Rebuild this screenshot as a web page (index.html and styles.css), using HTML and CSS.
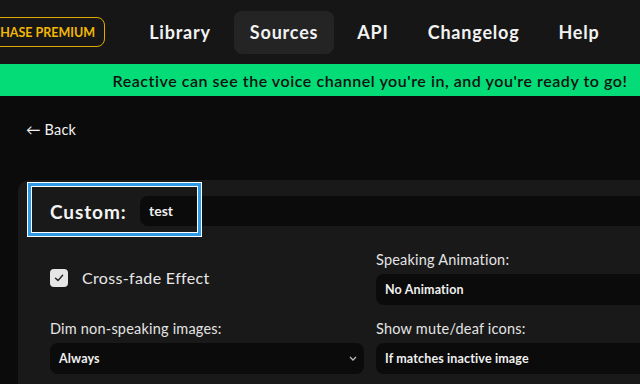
FILE: index.html
```html
<!DOCTYPE html>
<html lang="en">
<head>
  <meta charset="UTF-8" />
  <title>Reactive - Sources</title>
  <link rel="stylesheet" href="styles.css">
</head>
<body>

  <header class="topbar">
    <a class="premium" href="#">PURCHASE PREMIUM</a>
    <nav class="nav">
      <a href="#">Library</a>
      <a href="#" class="active">Sources</a>
      <a href="#">API</a>
      <a href="#">Changelog</a>
      <a href="#">Help</a>
    </nav>
  </header>

  <div class="banner">Reactive can see the voice channel you're in, and you're ready to go!</div>

  <main class="page">
    <a class="back" href="#">&larr; Back</a>

    <section class="card">
      <div class="name-row">
        <span class="name-label">Custom:</span>
        <div class="name-input">test</div>
      </div>
      <!-- tutorial highlight drawn over the name row -->
      <div class="highlight"></div>

      <div class="options">
        <label class="check">
          <span class="box">
            <svg width="10" height="10" viewBox="0 0 10 10"><path d="M1.5 5.2 L4 7.6 L8.6 2.2" fill="none" stroke="#222" stroke-width="1.4" stroke-linecap="round" stroke-linejoin="round"/></svg>
          </span>
          Cross-fade Effect
        </label>

        <div class="field">
          <div class="field-label">Speaking Animation:</div>
          <div class="select">No Animation</div>
        </div>

        <div class="field">
          <div class="field-label">Dim non-speaking images:</div>
          <div class="select">Always
            <svg class="chev" width="8" height="5" viewBox="0 0 8 5"><path d="M1 1 L4 4 L7 1" fill="none" stroke="#bbb" stroke-width="1.3"/></svg>
          </div>
        </div>

        <div class="field">
          <div class="field-label">Show mute/deaf icons:</div>
          <div class="select">If matches inactive image</div>
        </div>
      </div>
    </section>
  </main>

</body>
</html>
```

FILE: styles.css
```css
body {
  margin: 0;
  background: #0b0b0b;
  color: #e6e6e6;
  font-family: Lato, "Open Sans", sans-serif;
  overflow: hidden;
}

a {
  text-decoration: none;
  color: inherit;
}

.topbar {
  height: 64px;
  background: #161616;
  display: flex;
  align-items: center;
}

.premium {
  margin-left: -44px;
  height: 28px;
  padding: 0 9px 0 10px;
  display: flex;
  align-items: center;
  border: 1px solid #e3a900;
  border-radius: 8px;
  color: #f2b705;
  font-size: 12.5px;
  font-weight: 700;
  white-space: nowrap;
}

.nav {
  margin-left: 28px;
  display: flex;
  gap: 7px;
}

.nav a {
  height: 43px;
  padding: 0 16px;
  display: flex;
  align-items: center;
  font-size: 18px;
  font-weight: 700;
  letter-spacing: 0.8px;
  color: #f2f2f2;
  border-radius: 8px;
  white-space: nowrap;
}

.nav a.active {
  background: #242424;
}

.banner {
  height: 32px;
  background: #03dc77;
  color: #111;
  display: flex;
  align-items: center;
  justify-content: center;
  padding-left: 100px;
  font-size: 16px;
  font-weight: 600;
  letter-spacing: 0.55px;
  white-space: nowrap;
}

.page {
  padding: 24px 0 0 18px;
}

.back {
  display: block;
  margin-left: 8px;
  font-size: 14.5px;
  line-height: 20px;
  letter-spacing: 0.2px;
  color: #f2f2f2;
}

.card {
  position: relative;
  margin-top: 40px;
  background: #191919;
  border-top-left-radius: 12px;
  padding: 16px 0 20px 32px;
  width: 700px;
}

.name-row {
  display: flex;
  align-items: center;
  height: 30px;
}

.name-label {
  width: 90px;
  font-size: 19px;
  font-weight: 700;
  letter-spacing: 0.9px;
  color: #f4f4f4;
}

.name-input {
  flex: 1;
  height: 30px;
  line-height: 30px;
  background: #0b0b0b;
  border-radius: 8px 0 0 8px;
  padding-left: 9px;
  font-size: 14px;
  font-weight: 700;
  color: #eee;
}

.highlight {
  position: absolute;
  left: 10px;
  top: 3px;
  width: 167px;
  height: 47px;
  border: 3px solid #2f9ae8;
  outline: 1px solid #fff;
  box-shadow: inset 0 0 0 1px #fff;
}

.options {
  margin-top: 24px;
  display: grid;
  grid-template-columns: 314px 314px;
  column-gap: 12px;
  row-gap: 14px;
}

.check {
  display: flex;
  align-items: center;
  gap: 14px;
  font-size: 16px;
  letter-spacing: 0.35px;
  color: #e8e8e8;
}

.box {
  width: 18px;
  height: 18px;
  border-radius: 4px;
  background: #e6e6e6;
  display: flex;
  align-items: center;
  justify-content: center;
}

.field-label {
  font-size: 14.5px;
  line-height: 20px;
  letter-spacing: 0.2px;
  margin-bottom: 4px;
  color: #e4e4e4;
}

.select {
  position: relative;
  height: 31px;
  line-height: 31px;
  background: #0b0b0b;
  border-radius: 8px;
  padding-left: 9px;
  font-size: 12.5px;
  font-weight: 700;
  letter-spacing: 0.15px;
  color: #f0f0f0;
}

.chev {
  position: absolute;
  right: 7px;
  top: 13px;
}
```
